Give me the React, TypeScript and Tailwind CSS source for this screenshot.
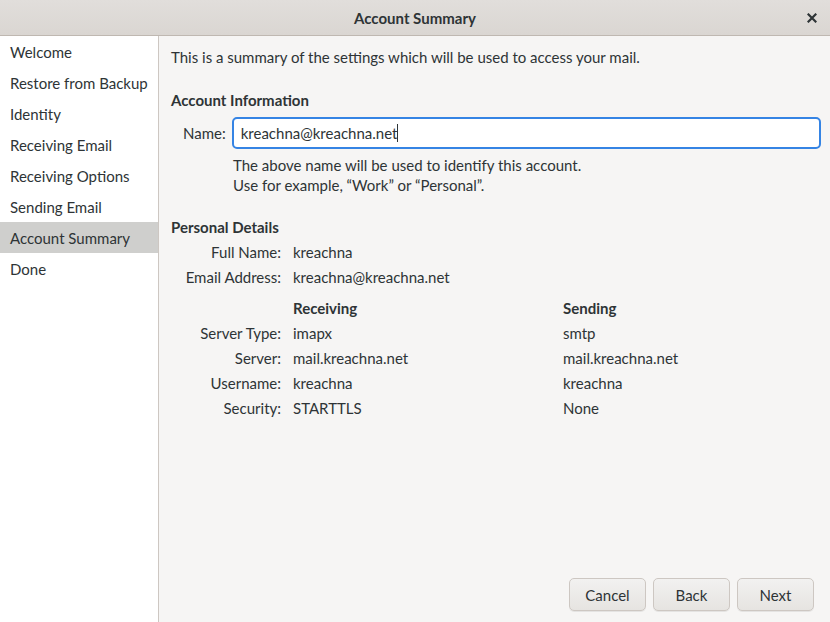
import React from "react";

const steps = [
  "Welcome",
  "Restore from Backup",
  "Identity",
  "Receiving Email",
  "Receiving Options",
  "Sending Email",
  "Account Summary",
  "Done",
];

const servers: [string, string, string][] = [
  ["Server Type:", "imapx", "smtp"],
  ["Server:", "mail.kreachna.net", "mail.kreachna.net"],
  ["Username:", "kreachna", "kreachna"],
  ["Security:", "STARTTLS", "None"],
];

function Button({ label }: { label: string }) {
  return (
    <button className="w-[77px] h-[33px] rounded-[5px] border border-[#cdc7c2] bg-gradient-to-b from-[#f2f1f0] to-[#e6e4e1] text-[#2e3436] shadow-[0_1px_0_rgba(0,0,0,0.07)]">
      {label}
    </button>
  );
}

export default function App() {
  return (
    <div
      className="w-[830px] h-[622px] flex flex-col bg-[#f6f5f4] text-[#2e3436] text-[15px] leading-[20px] overflow-hidden"
      style={{ fontFamily: "Lato, 'Noto Sans', sans-serif" }}
    >
      {/* header bar */}
      <div className="relative h-[36px] shrink-0 flex items-center justify-center bg-gradient-to-b from-[#e1dedb] to-[#dad6d2] border-b border-[#bfb8b1]">
        <span className="font-bold">Account Summary</span>
        <button className="absolute right-[9px] top-[9px] w-[18px] h-[18px] flex items-center justify-center">
          <svg width="10" height="10" viewBox="0 0 10 10">
            <path d="M1.5 1.5 L8.5 8.5 M8.5 1.5 L1.5 8.5" stroke="#2e3436" strokeWidth="2.2" strokeLinecap="square" />
          </svg>
        </button>
      </div>

      <div className="flex flex-1 min-h-0">
        <aside className="w-[159px] shrink-0 bg-white border-r border-[#cdc7c2]">
          {steps.map((s) => (
            <div
              key={s}
              className={`h-[31px] flex items-center pl-[10px] ${s === "Account Summary" ? "bg-[#cfcfcd]" : ""}`}
            >
              {s}
            </div>
          ))}
        </aside>

        <main className="flex-1 flex flex-col pl-[12px] pr-[9px] pt-[11px]">
          <p>This is a summary of the settings which will be used to access your mail.</p>

          <h2 className="font-bold mt-[23px]">Account Information</h2>
          <div className="flex items-center ml-[12px] mt-[7px] gap-[6px]">
            <span>Name:</span>
            <div className="flex-1 h-[32px] rounded-[5px] border-2 border-[#3584e4] bg-white flex items-center px-[7px]">
              <span>kreachna@kreachna.net</span>
              <span className="w-px h-[18px] bg-[#2e3436]" />
            </div>
          </div>
          <div className="ml-[62px] mt-[6px]">
            <p>The above name will be used to identify this account.</p>
            <p>Use for example, “Work” or “Personal”.</p>
          </div>

          <h2 className="font-bold mt-[22px]">Personal Details</h2>
          <div className="ml-[12px] mt-[2px] grid grid-cols-[98px_258px_auto] grid-rows-[25px_25px_31px_25px_25px_25px_25px] gap-x-[12px] items-center">
            <span className="text-right">Full Name:</span>
            <span className="col-span-2">kreachna</span>
            <span className="text-right">Email Address:</span>
            <span className="col-span-2">kreachna@kreachna.net</span>
            <span />
            <span className="font-bold pt-[6px]">Receiving</span>
            <span className="font-bold pt-[6px]">Sending</span>
            {servers.map(([l, r, s]) => (
              <React.Fragment key={l}>
                <span className="text-right">{l}</span>
                <span>{r}</span>
                <span>{s}</span>
              </React.Fragment>
            ))}
          </div>

          <div className="mt-auto flex justify-end gap-[7px] pr-[7px] pb-[11px]">
            <Button label="Cancel" />
            <Button label="Back" />
            <Button label="Next" />
          </div>
        </main>
      </div>
    </div>
  );
}
